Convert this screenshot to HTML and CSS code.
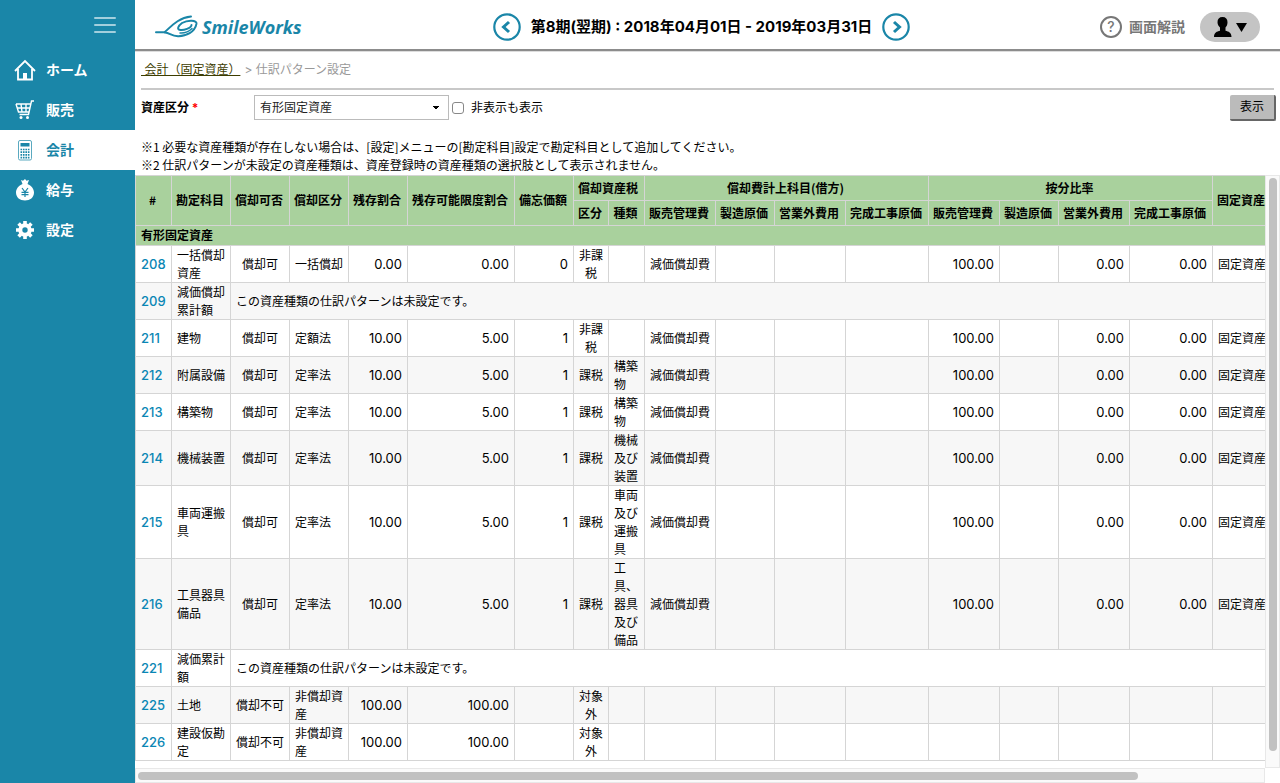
FILE: index.html
```html
<!DOCTYPE html>
<html lang="ja">
<head>
<meta charset="utf-8">
<title>仕訳パターン設定</title>
<link rel="stylesheet" href="styles.css">
</head>
<body>
<nav class="sidebar">
  <button class="menu-toggle" aria-label="メニュー"><svg width="24" height="20" viewBox="0 0 24 20"><path d="M2 3h20M2 10h20M2 17h20" stroke="#a3cfdd" stroke-width="2" stroke-linecap="round"/></svg></button>
  <a class="nav-item" href="#"><svg class="nav-icon" viewBox="0 0 22 22"><path d="M1 12L11 2l10 10M4 10v10.500h14V10" fill="none" stroke="currentColor" stroke-width="1.800"/><path d="M9 14h4v6H9z" fill="currentColor"/></svg>ホーム</a>
  <a class="nav-item" href="#"><svg class="nav-icon" viewBox="0 0 22 22"><path d="M20 2h-2.500L14.500 15.500H5.500M2 5h15M2 5l2.500 8h10.500M3.200 9h13M7 5l1 8M12 5v8" fill="none" stroke="currentColor" stroke-width="1.400"/><circle cx="7" cy="18.500" r="1.500" fill="currentColor"/><circle cx="13.500" cy="18.500" r="1.500" fill="currentColor"/></svg>販売</a>
  <a class="nav-item active" href="#"><svg class="nav-icon" viewBox="0 0 22 22"><rect x="4.500" y="1.500" width="13" height="19.500" rx="1.500" fill="none" stroke="#5aa9c0"/><path d="M6.500 4h9v3.500h-9z" fill="currentColor"/><path d="M6.500 10.500h9M6.500 13.200h9M6.500 15.900h9M6.500 18.600h9" stroke="currentColor" stroke-width="1.700" stroke-dasharray="1.600 .85"/></svg>会計</a>
  <a class="nav-item" href="#"><svg class="nav-icon" viewBox="0 0 22 22"><path d="M7 1l2 .8L11 0l1.500 1.800L15 1l-1.500 4c4 1.500 6.500 5 6.500 8.500 0 5-4 8-9 8s-9-3-9-8C2 10 4.500 6.500 8.500 5z" fill="currentColor"/><path d="M8 9l3 4 3-4M11 12.500v5.500M7.500 13.300h7M7.500 15.700h7" fill="none" stroke="#1a86a8" stroke-width="1.200"/></svg>給与</a>
  <a class="nav-item" href="#"><svg class="nav-icon" viewBox="0 0 22 22"><circle cx="11" cy="11" r="4.700" fill="none" stroke="currentColor" stroke-width="4"/><path d="M11 2v3M11 17v3M2 11h3M17 11h3M4.600 4.600l2.200 2.200M15.200 15.200l2.200 2.200M4.600 17.400l2.200-2.200M15.200 6.800l2.200-2.200" stroke="currentColor" stroke-width="3.600"/></svg>設定</a>
</nav>
<div class="main">
  <header class="topbar">
    <a class="logo" href="#"><svg width="44" height="24" viewBox="0 0 44 24" fill="none" stroke="#1a86a8" stroke-linecap="round"><path d="M1 17.200h8.500C15 13 22 3 36 1.500" stroke-width="2"/><path d="M10 17.500c5 .5 6 3.500 13 3.700 8 .2 17-4 18.500-12.500C42 5 33 4.500 27 8c-4 3-5 6-2.500 6.800 4 1.200 12-2 12-4.800" stroke-width="2"/><path d="M25 18c5 .3 9-1.500 12-4.500" stroke-width="1.500"/></svg><span class="logo-text">SmileWorks</span></a>
    <div class="period">
      <button class="round" aria-label="前の期"><svg width="28" height="28" viewBox="0 0 28 28"><circle cx="14" cy="14" r="12.700" fill="none" stroke="#1a86a8" stroke-width="2.200"/><path d="M16 9l-5.500 5 5.500 5" fill="none" stroke="#1a86a8" stroke-width="3"/></svg></button>
      <span>第8期(翌期) : 2018年04月01日 - 2019年03月31日</span>
      <button class="round" aria-label="次の期"><svg width="28" height="28" viewBox="0 0 28 28"><circle cx="14" cy="14" r="12.700" fill="none" stroke="#1a86a8" stroke-width="2.200"/><path d="M12 9l5.500 5-5.500 5" fill="none" stroke="#1a86a8" stroke-width="3"/></svg></button>
    </div>
    <div class="tools">
      <a class="help" href="#"><span class="help-mark">?</span>画面解説</a>
      <button class="user" aria-label="ユーザー"><svg width="34" height="22" viewBox="0 0 34 22"><path d="M9.500 1c3.300 0 5 2 5 5.300 0 2.500-.9 4.200-2 5.200v3.200c3 .8 6 1.500 6 6.300H1c0-4.800 3-5.500 6-6.300v-3.200c-1.100-1-2.500-2.700-2.500-5.200C4.500 3 6.200 1 9.500 1z"/><path d="M23 7h11l-5.500 9z"/></svg></button>
    </div>
  </header>
  <div class="crumbs"><a href="#">&nbsp;会計（固定資産）</a><span>&gt; 仕訳パターン設定</span></div>
  <form class="filter">
    <label class="filter-label" for="kind">資産区分 <em>*</em></label>
    <select id="kind" class="kind"><option>有形固定資産</option></select>
    <input class="tick" type="checkbox" id="hidden-too"><label for="hidden-too">非表示も表示</label>
    <button class="show" type="button">表示</button>
  </form>
  <div class="notes">
    <p>※1 必要な資産種類が存在しない場合は、[設定]メニューの[勘定科目]設定で勘定科目として追加してください。</p>
    <p>※2 仕訳パターンが未設定の資産種類は、資産登録時の資産種類の選択肢として表示されません。</p>
  </div>
  <div class="pane">
    <div class="scroller">
      <table class="grid">
        <colgroup><col class="w36"><col class="w59"><col class="w59"><col class="w59"><col class="w59"><col class="w107"><col class="w59"><col class="w35"><col class="w36"><col class="w71"><col class="w59"><col class="w71"><col class="w83"><col class="w71"><col class="w59"><col class="w71"><col class="w83"><col></colgroup>
        <thead>
          <tr><th rowspan="2">#</th><th rowspan="2">勘定科目</th><th rowspan="2">償却可否</th><th rowspan="2">償却区分</th><th rowspan="2">残存割合</th><th rowspan="2">残存可能限度割合</th><th rowspan="2">備忘価額</th><th colspan="2">償却資産税</th><th colspan="4">償却費計上科目(借方)</th><th colspan="4">按分比率</th><th rowspan="2" class="l">固定資産</th></tr>
          <tr><th>区分</th><th>種類</th><th>販売管理費</th><th>製造原価</th><th>営業外費用</th><th>完成工事原価</th><th>販売管理費</th><th>製造原価</th><th>営業外費用</th><th>完成工事原価</th></tr>
          <tr class="group"><th colspan="18">有形固定資産</th></tr>
        </thead>
        <tbody>
          <tr><td><a href="#">208</a></td><td>一括償却資産</td><td class="c">償却可</td><td>一括償却</td><td class="r">0.00</td><td class="r">0.00</td><td class="r">0</td><td class="c">非課税</td><td></td><td>減価償却費</td><td></td><td></td><td></td><td class="r">100.00</td><td></td><td class="r">0.00</td><td class="r">0.00</td><td>固定資産</td></tr>
          <tr><td><a href="#">209</a></td><td>減価償却累計額</td><td colspan="16">この資産種類の仕訳パターンは未設定です。</td></tr>
          <tr><td><a href="#">211</a></td><td>建物</td><td class="c">償却可</td><td>定額法</td><td class="r">10.00</td><td class="r">5.00</td><td class="r">1</td><td class="c">非課税</td><td></td><td>減価償却費</td><td></td><td></td><td></td><td class="r">100.00</td><td></td><td class="r">0.00</td><td class="r">0.00</td><td>固定資産</td></tr>
          <tr><td><a href="#">212</a></td><td>附属設備</td><td class="c">償却可</td><td>定率法</td><td class="r">10.00</td><td class="r">5.00</td><td class="r">1</td><td class="c">課税</td><td>構築物</td><td>減価償却費</td><td></td><td></td><td></td><td class="r">100.00</td><td></td><td class="r">0.00</td><td class="r">0.00</td><td>固定資産</td></tr>
          <tr><td><a href="#">213</a></td><td>構築物</td><td class="c">償却可</td><td>定率法</td><td class="r">10.00</td><td class="r">5.00</td><td class="r">1</td><td class="c">課税</td><td>構築物</td><td>減価償却費</td><td></td><td></td><td></td><td class="r">100.00</td><td></td><td class="r">0.00</td><td class="r">0.00</td><td>固定資産</td></tr>
          <tr><td><a href="#">214</a></td><td>機械装置</td><td class="c">償却可</td><td>定率法</td><td class="r">10.00</td><td class="r">5.00</td><td class="r">1</td><td class="c">課税</td><td>機械及び装置</td><td>減価償却費</td><td></td><td></td><td></td><td class="r">100.00</td><td></td><td class="r">0.00</td><td class="r">0.00</td><td>固定資産</td></tr>
          <tr><td><a href="#">215</a></td><td>車両運搬具</td><td class="c">償却可</td><td>定率法</td><td class="r">10.00</td><td class="r">5.00</td><td class="r">1</td><td class="c">課税</td><td>車両及び運搬具</td><td>減価償却費</td><td></td><td></td><td></td><td class="r">100.00</td><td></td><td class="r">0.00</td><td class="r">0.00</td><td>固定資産</td></tr>
          <tr><td><a href="#">216</a></td><td>工具器具備品</td><td class="c">償却可</td><td>定率法</td><td class="r">10.00</td><td class="r">5.00</td><td class="r">1</td><td class="c">課税</td><td>工具、器具及び備品</td><td>減価償却費</td><td></td><td></td><td></td><td class="r">100.00</td><td></td><td class="r">0.00</td><td class="r">0.00</td><td>固定資産</td></tr>
          <tr><td><a href="#">221</a></td><td>減価累計額</td><td colspan="16">この資産種類の仕訳パターンは未設定です。</td></tr>
          <tr><td><a href="#">225</a></td><td>土地</td><td class="c">償却不可</td><td>非償却資産</td><td class="r">100.00</td><td class="r">100.00</td><td></td><td class="c">対象外</td><td></td><td></td><td></td><td></td><td></td><td></td><td></td><td></td><td></td><td></td></tr>
          <tr><td><a href="#">226</a></td><td>建設仮勘定</td><td class="c">償却不可</td><td>非償却資産</td><td class="r">100.00</td><td class="r">100.00</td><td></td><td class="c">対象外</td><td></td><td></td><td></td><td></td><td></td><td></td><td></td><td></td><td></td><td></td></tr>
        </tbody>
      </table>
    </div>
    <div class="bar bar-v"><div class="thumb"></div></div>
    <div class="bar bar-h"><div class="thumb"></div></div>
  </div>
</div>
</body>
</html>
```
FILE: styles.css
```css
* { box-sizing: border-box; }
body {
  margin: 0;
  height: 100vh;
  display: flex;
  font: 12px/18px Inter, "Noto Sans CJK JP", sans-serif;
  color: #000;
  background: #fff;
}
button { border: 0; padding: 0; background: none; font: inherit; color: inherit; cursor: pointer; }
svg { display: block; }
p { margin: 0; }

.sidebar { flex: 0 0 135px; display: flex; flex-direction: column; background: #1a86a8; }
.menu-toggle { height: 50px; padding-right: 18px; display: flex; justify-content: flex-end; align-items: center; }
.nav-item {
  height: 40px;
  padding-left: 14px;
  display: flex;
  align-items: center;
  gap: 10px;
  font-size: 14px;
  font-weight: 700;
  color: #fff;
  text-decoration: none;
}
.nav-item.active { background: #fff; color: #1a86a8; }
.nav-icon { width: 22px; height: 22px; }

.main { flex: 1; min-width: 0; display: flex; flex-direction: column; }
.topbar {
  height: 51px;
  flex: none;
  padding: 4px 20px 0 8px;
  display: grid;
  grid-template-columns: 1fr auto 1fr;
  align-items: center;
  border-bottom: 2px solid #8c8c8c;
  box-shadow: 0 1px 0 #ddd;
}
.logo { margin-left: 12px; display: flex; align-items: center; gap: 3px; color: #1a86a8; text-decoration: none; }
.logo-text { font: italic 700 18px/24px "Open Sans", sans-serif; }
.period { display: flex; align-items: center; gap: 10px; font: 700 15px/20px Inter, "Noto Sans CJK JP", sans-serif; }
.tools { display: flex; justify-content: flex-end; align-items: center; gap: 15px; }
.help { display: flex; align-items: center; gap: 7px; font-size: 14px; font-weight: 700; color: #777; text-decoration: none; }
.help-mark { width: 22px; height: 22px; border: 2px solid #777; border-radius: 50%; font: 500 14px/18px Inter, sans-serif; text-align: center; }
.user { width: 60px; height: 30px; border-radius: 15px; background: #c4c4c4; display: flex; align-items: center; justify-content: center; }

.crumbs { margin: 0 6px; height: 39px; flex: none; display: flex; align-items: center; gap: 4px; border-bottom: 2px solid #c8c8c8; color: #999; }
.crumbs a { color: #3c3c00; }
.filter { padding: 5px 4px 0 6px; display: flex; align-items: center; }
.filter-label { width: 113px; font-weight: 700; }
.filter-label em { color: #f00; font-style: normal; }
.kind {
  width: 195px;
  height: 25px;
  margin-bottom: 1px;
  padding: 0 5px;
  appearance: none;
  border: 1px solid #bbb;
  border-radius: 0;
  font: inherit;
  color: #222;
  background: linear-gradient(to bottom left, #000 50%, transparent 51%) 178px 10px / 3px 3px no-repeat, linear-gradient(to bottom right, #000 50%, transparent 51%) 181px 10px / 3px 3px no-repeat, #fff;
}
.tick { appearance: none; width: 12px; height: 12px; margin: 0 7px 0 3px; border: 1px solid #888; border-radius: 3px; background: #fff; }
.show { margin-left: auto; width: 46px; height: 26px; border-radius: 2px; background: #bbb; border-right: 2px solid #666; border-bottom: 2px solid #666; }
.notes { padding: 17px 6px 1px; font-family: "Noto Sans CJK JP", sans-serif; }

/* Table pane with its scroll bars */
.pane { flex: 1; min-height: 0; display: grid; grid-template: minmax(0, 1fr) 15px / minmax(0, 1fr) 15px; }
.scroller { overflow: auto; scrollbar-width: none; }
.bar { background: #fafafa; border: 1px solid #e8e8e8; }
.bar-v { padding: 2px 2px 16px 3px; }
.bar-v .thumb { width: 8px; height: 100%; }
.bar-h { padding: 3px 2px; }
.bar-h .thumb { width: 89%; height: 8px; }
.thumb { border-radius: 4px; background: #c1c1c1; }

.grid { width: 1268px; table-layout: fixed; border-collapse: collapse; font-family: "Noto Sans CJK JP", sans-serif; }
.grid th, .grid td { border: 1px solid #d5d5d5; padding: 0 5px; text-align: left; }
.grid th { height: 25px; padding: 0 2px 0 0; background: #a9d19d; text-align: center; white-space: nowrap; }
.grid th[rowspan] { padding-bottom: 2px; }
.grid .group th { height: 20px; padding: 0 5px 1px; text-align: left; }
.grid th.l { padding: 0 4px 2px; text-align: left; }
.grid tbody tr:nth-child(even) { background: #f7f7f7; }
.grid td.c { text-align: center; }
.grid td.r { text-align: right; font-family: Inter, sans-serif; font-size: 13px; }
.grid td a { color: #0a86b4; font-family: Inter, sans-serif; font-size: 13px; font-weight: 500; text-decoration: none; }
.w35 { width: 35px; }
.w36 { width: 36px; }
.w59 { width: 59px; }
.w71 { width: 71px; }
.w83 { width: 83px; }
.w107 { width: 107px; }
```
